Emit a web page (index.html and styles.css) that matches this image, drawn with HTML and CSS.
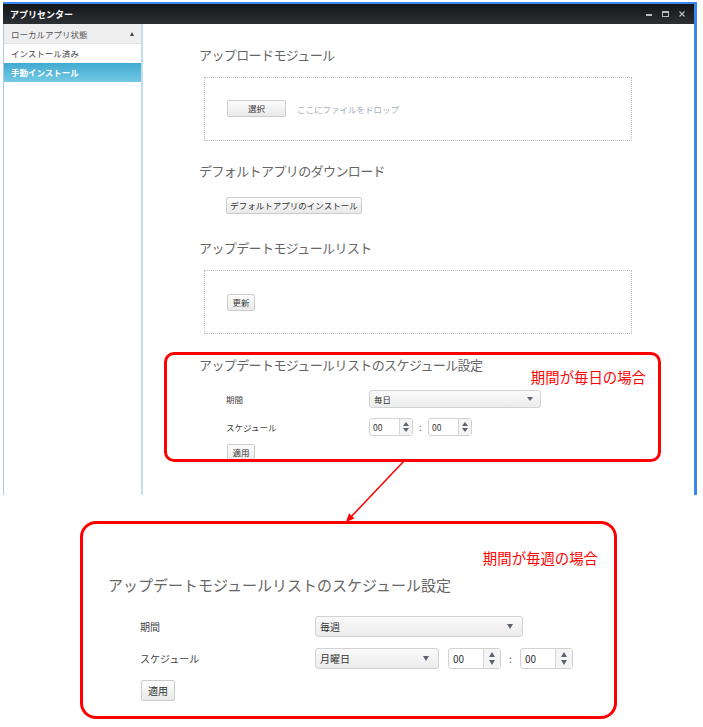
FILE: index.html
```html
<!DOCTYPE html>
<html lang="ja">
<head>
<meta charset="utf-8">
<title>アプリセンター</title>
<link rel="stylesheet" href="styles.css">
</head>
<body>
<div class="page">
  <div class="window">
    <div class="titlebar">
      <span class="title">アプリセンター</span>
      <svg class="controls" width="41" height="20" viewBox="0 0 41 20">
        <rect x="1" y="10" width="6" height="2" fill="#b9bcbf"/>
        <rect x="17.5" y="7.5" width="6" height="5" fill="none" stroke="#b9bcbf" stroke-width="1"/>
        <rect x="17" y="7" width="7" height="2" fill="#b9bcbf"/>
        <path d="M34.5 7.5 L39.5 12.5 M39.5 7.5 L34.5 12.5" stroke="#b9bcbf" stroke-width="1.2"/>
      </svg>
    </div>
    <div class="body">
      <aside class="sidebar">
        <div class="side-head"><span>ローカルアプリ状態</span><span class="caret"></span></div>
        <div class="side-item">インストール済み</div>
        <div class="side-item active">手動インストール</div>
      </aside>
      <main class="content">
        <h2 class="h">アップロードモジュール</h2>
        <div class="drop drop-upload">
          <button class="btn btn-select">選択</button>
          <span class="hint">ここにファイルをドロップ</span>
        </div>

        <h2 class="h h-default">デフォルトアプリのダウンロード</h2>
        <button class="btn btn-default">デフォルトアプリのインストール</button>

        <h2 class="h h-list">アップデートモジュールリスト</h2>
        <div class="drop drop-list">
          <button class="btn btn-refresh">更新</button>
        </div>

        <h2 class="h h-sched">アップデートモジュールリストのスケジュール設定</h2>
        <div class="form-row row-first">
          <span class="lbl">期間</span>
          <div class="select sel-period"><span>毎日</span><i class="down"></i></div>
        </div>
        <div class="form-row row-next">
          <span class="lbl">スケジュール</span>
          <div class="spin"><span class="spin-val">00</span><span class="spin-btn"><i class="up"></i><i class="down"></i></span></div>
          <span class="colon">:</span>
          <div class="spin"><span class="spin-val">00</span><span class="spin-btn"><i class="up"></i><i class="down"></i></span></div>
        </div>
        <button class="btn btn-apply">適用</button>
      </main>
    </div>
  </div>

  <section class="panel">
    <div class="note note-weekly">期間が毎週の場合</div>
    <h2 class="h h-lg">アップデートモジュールリストのスケジュール設定</h2>
    <div class="form-row lg row-first-lg">
      <span class="lbl">期間</span>
      <div class="select sel-period-lg"><span>毎週</span><i class="down"></i></div>
    </div>
    <div class="form-row lg row-next-lg">
      <span class="lbl">スケジュール</span>
      <div class="select sel-day-lg"><span>月曜日</span><i class="down"></i></div>
      <div class="spin spin-first"><span class="spin-val">00</span><span class="spin-btn"><i class="up"></i><i class="down"></i></span></div>
      <span class="colon">:</span>
      <div class="spin"><span class="spin-val">00</span><span class="spin-btn"><i class="up"></i><i class="down"></i></span></div>
    </div>
    <button class="btn btn-apply-lg">適用</button>
  </section>

  <div class="callout">
    <span class="note">期間が毎日の場合</span>
  </div>
  <svg class="arrow" width="70" height="70" viewBox="0 0 70 70">
    <line x1="64" y1="6" x2="10" y2="63" stroke="#ff0000" stroke-width="1.5"/>
    <polygon points="6,67 14.5,63.6 9,58.3" fill="#ff0000"/>
  </svg>
</div>
</body>
</html>
```

FILE: styles.css
```css
* { box-sizing: border-box; }

body {
  margin: 0;
  background: #ffffff;
  font-family: "Noto Sans CJK JP", "Noto Sans", sans-serif;
}

.page {
  position: relative;
  width: 703px;
  height: 727px;
  padding-top: 2px;
}

/* ---------- window ---------- */
.window {
  margin-left: 3px;
  width: 694px;
  border-top: 2px solid #3a86f4;
  border-right: 3px solid #3a86f4;
}

.titlebar {
  height: 20px;
  display: flex;
  align-items: center;
  padding-left: 7px;
  background: linear-gradient(#141618, #2c2f33);
  color: #ffffff;
  font-size: 9px;
  font-weight: bold;
}

.controls {
  margin-left: auto;
  margin-right: 8px;
}

.body {
  display: flex;
  height: 471px;
}

.sidebar {
  width: 140px;
  flex: none;
  border-left: 1px solid #a9c8ef;
  border-right: 2px solid #c4dfec;
  font-size: 8.5px;
}

.side-head {
  height: 20px;
  display: flex;
  align-items: center;
  justify-content: space-between;
  padding: 0 7px 0 7px;
  background: #efefef;
  border-bottom: 1px solid #e2e2e2;
  color: #555555;
}

.caret {
  width: 0;
  height: 0;
  border-left: 2.5px solid transparent;
  border-right: 2.5px solid transparent;
  border-bottom: 4px solid #444444;
}

.side-item {
  height: 19px;
  line-height: 19px;
  padding-left: 7px;
  color: #444444;
}

.side-item.active {
  background: linear-gradient(#42aad1, #73c8e4);
  color: #ffffff;
  font-weight: bold;
}

.content {
  flex: 1;
  padding: 21px 0 0 56px;
}

.h {
  margin: 0;
  font-size: 13px;
  line-height: 20px;
  font-weight: normal;
  color: #666666;
  letter-spacing: -0.6px;
}

.h-default { margin-top: 20px; }
.h-list { margin-top: 24px; }
.h-sched { margin-top: 21px; }

.drop {
  width: 428px;
  margin: 12px 0 0 5px;
  border: 1px dotted #bdbdbd;
  display: flex;
  align-items: center;
  padding-left: 22px;
}

.drop-upload { padding-top: 22px; padding-bottom: 23px; }
.drop-list { padding-top: 23px; padding-bottom: 22px; }

.btn {
  display: block;
  height: 17px;
  padding: 0;
  font-family: inherit;
  font-size: 8.5px;
  line-height: 15px;
  color: #333333;
  background: linear-gradient(#fdfdfd, #e9e9e9);
  border: 1px solid #cccccc;
  border-radius: 2px;
}

.btn-select { width: 59px; }
.btn-refresh { width: 28px; }
.btn-default { width: 136px; margin: 16px 0 0 27px; }
.btn-apply { width: 28px; margin: 8px 0 0 28px; }

.hint {
  margin-left: 11px;
  font-size: 8.5px;
  color: #a7aec2;
}

/* ---------- form rows ---------- */
.form-row {
  display: flex;
  align-items: center;
  margin-left: 27px;
  font-size: 8.5px;
  color: #444444;
}

.row-first { margin-top: 15px; }
.row-next { margin-top: 10px; }

.lbl {
  width: 143px;
  flex: none;
}

.select {
  height: 18px;
  display: flex;
  align-items: center;
  justify-content: space-between;
  padding: 0 7px 0 4px;
  border: 1px solid #d2d2d2;
  border-radius: 3px;
  background: linear-gradient(#fafafa, #ececec);
  color: #333333;
}

.sel-period { width: 172px; }

.up, .down {
  display: block;
  width: 0;
  height: 0;
  border-left: 3px solid transparent;
  border-right: 3px solid transparent;
}
.up { border-bottom: 4px solid #5d6270; }
.down { border-top: 4px solid #5d6270; }

.spin {
  width: 44px;
  height: 18px;
  display: flex;
  border: 1px solid #d2d2d2;
  border-radius: 3px;
  background: #ffffff;
}

.spin-val {
  width: 29px;
  display: flex;
  align-items: center;
  padding-left: 3px;
  color: #333333;
}

.spin-btn {
  flex: 1;
  display: flex;
  flex-direction: column;
  align-items: center;
  justify-content: center;
  gap: 2px;
  border-left: 1px solid #d8d8d8;
  background: #f4f4f4;
}

.colon {
  width: 15px;
  text-align: center;
  color: #555555;
}

/* ---------- enlarged panel ---------- */
.panel {
  width: 537px;
  height: 198px;
  margin: 26px 0 0 80px;
  border: 3px solid #ff0000;
  border-radius: 16px;
  padding: 24px 16px 15px 25px;
}

.note {
  font-size: 14.4px;
  line-height: 20px;
  color: #ff0000;
}

.note-weekly { text-align: right; }

.h-lg {
  margin-top: 6px;
  font-size: 15px;
  line-height: 22px;
  letter-spacing: 0;
}

.form-row.lg {
  margin-left: 32px;
  font-size: 10px;
}

.lg .lbl { width: 175px; }
.lg .select { height: 21px; padding: 0 9px 0 4px; }
.lg .up, .lg .down { border-left-width: 3.5px; border-right-width: 3.5px; }
.lg .up { border-bottom-width: 5px; }
.lg .down { border-top-width: 5px; }

.row-first-lg { margin-top: 20px; }
.row-next-lg { margin-top: 11px; }

.sel-period-lg { width: 208px; }
.sel-day-lg { width: 124px; }

.lg .spin { width: 53px; height: 21px; }
.lg .spin-val { width: 34px; padding-left: 4px; }
.lg .spin-btn { gap: 3px; }
.lg .spin-first { margin-left: 9px; }
.lg .colon { width: 19px; }

.btn-apply-lg {
  width: 34px;
  height: 21px;
  margin: 11px 0 0 33px;
  font-size: 10px;
  line-height: 19px;
}

/* ---------- annotation overlays ---------- */
.callout {
  position: absolute;
  left: 164px;
  top: 352px;
  width: 497px;
  height: 110px;
  border: 3px solid #ff0000;
  border-radius: 10px;
  display: flex;
  justify-content: flex-end;
  align-items: flex-start;
  padding: 12px 12px 0 0;
}

.arrow {
  position: absolute;
  left: 340px;
  top: 455px;
}
```
